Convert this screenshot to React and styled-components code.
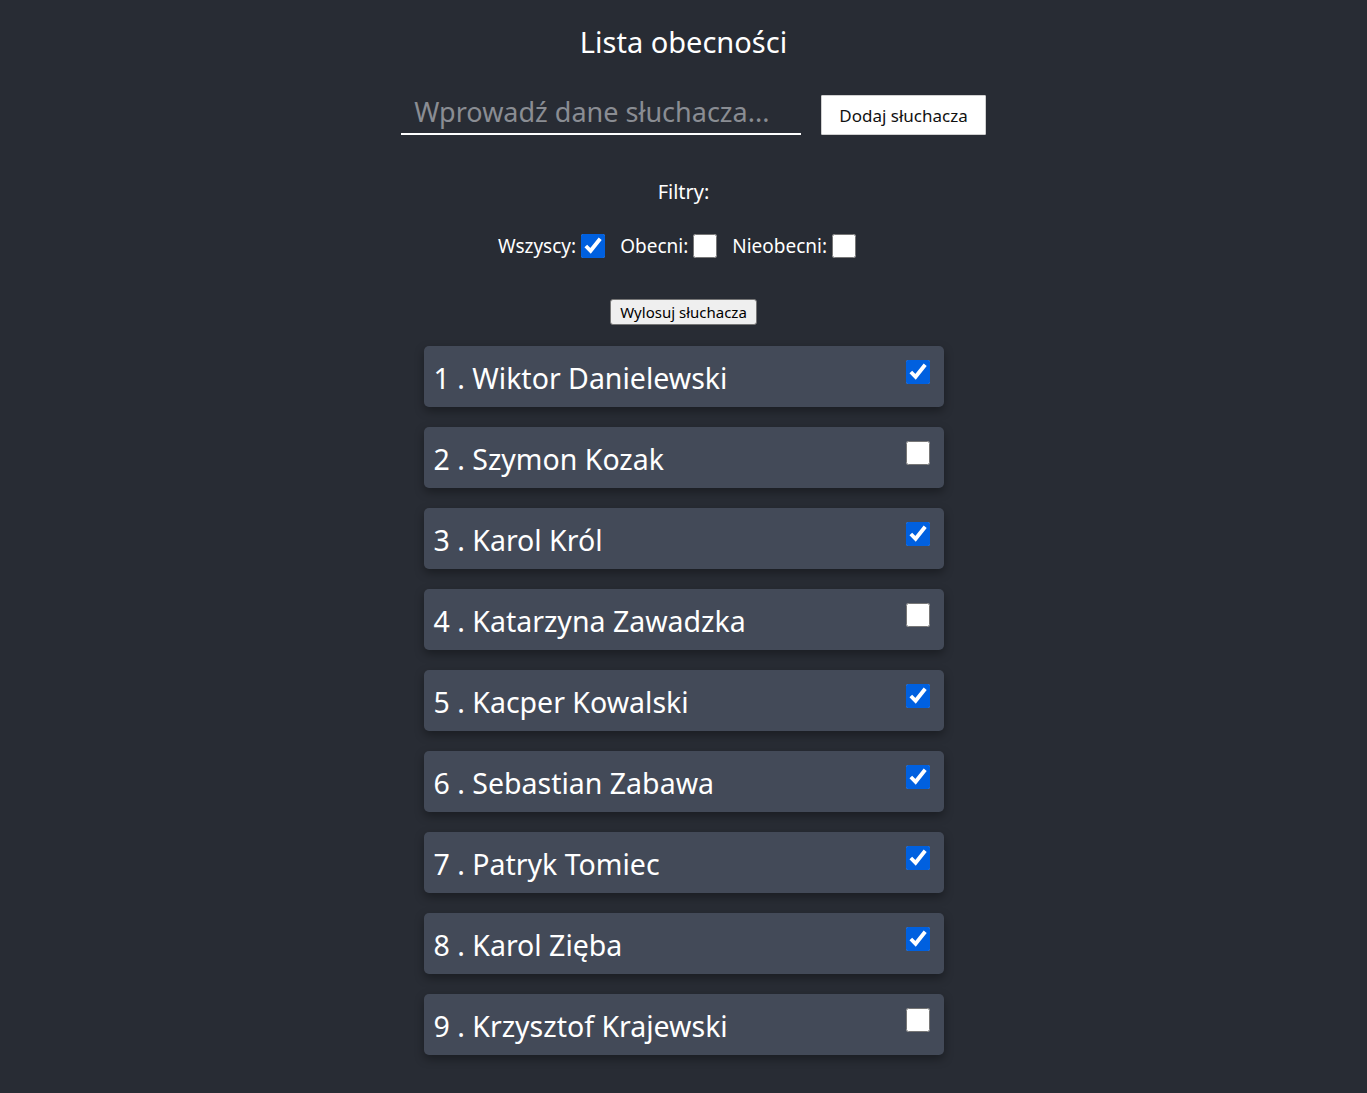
import React, { useState } from "react";
import styled, { createGlobalStyle } from "styled-components";

const GlobalStyle = createGlobalStyle`
  html, body {
    margin: 0;
    background: #282c34;
  }
  body {
    font-family: "Noto Sans", "Open Sans", sans-serif;
    color: #ffffff;
  }
`;

const initialStudents = [
  { id: 1, name: "Wiktor Danielewski", present: true },
  { id: 2, name: "Szymon Kozak", present: false },
  { id: 3, name: "Karol Król", present: true },
  { id: 4, name: "Katarzyna Zawadzka", present: false },
  { id: 5, name: "Kacper Kowalski", present: true },
  { id: 6, name: "Sebastian Zabawa", present: true },
  { id: 7, name: "Patryk Tomiec", present: true },
  { id: 8, name: "Karol Zięba", present: true },
  { id: 9, name: "Krzysztof Krajewski", present: false },
];

const App = () => {
  const [students, setStudents] = useState(initialStudents);
  const [filter, setFilter] = useState("all");
  const [input, setInput] = useState("");

  const toggleHandler = (id) => {
    setStudents((prev) =>
      prev.map((s) => (s.id === id ? { ...s, present: !s.present } : s))
    );
  };

  const addHandler = () => {
    if (!input.trim()) return;
    setStudents((prev) => [
      ...prev,
      { id: prev.length + 1, name: input.trim(), present: false },
    ]);
    setInput("");
  };

  const visible = students.filter((s) =>
    filter === "all" ? true : filter === "present" ? s.present : !s.present
  );

  return (
    <Page>
      <GlobalStyle />
      <Title>Lista obecności</Title>

      <AddRow>
        <NameInput
          placeholder="Wprowadź dane słuchacza..."
          value={input}
          onChange={(e) => setInput(e.target.value)}
        />
        <AddButton onClick={addHandler}>Dodaj słuchacza</AddButton>
      </AddRow>

      <FilterTitle>Filtry:</FilterTitle>
      <FilterRow>
        <FilterLabel>
          Wszyscy:
          <Check
            type="checkbox"
            checked={filter === "all"}
            onChange={() => setFilter("all")}
          />
        </FilterLabel>
        <FilterLabel>
          Obecni:
          <Check
            type="checkbox"
            checked={filter === "present"}
            onChange={() => setFilter("present")}
          />
        </FilterLabel>
        <FilterLabel>
          Nieobecni:
          <Check
            type="checkbox"
            checked={filter === "absent"}
            onChange={() => setFilter("absent")}
          />
        </FilterLabel>
      </FilterRow>

      <DrawButton>Wylosuj słuchacza</DrawButton>

      <List>
        {visible.map((s) => (
          <Card key={s.id}>
            <CardName>
              {s.id} . {s.name}
            </CardName>
            <Check
              type="checkbox"
              checked={s.present}
              onChange={() => toggleHandler(s.id)}
            />
          </Card>
        ))}
      </List>
    </Page>
  );
};

export default App;

const Page = styled.div`
  min-height: 1093px;
  display: flex;
  flex-direction: column;
  align-items: center;
  padding-top: 21px;
  box-sizing: border-box;
`;

const Title = styled.h1`
  margin: 0;
  font-size: 29px;
  font-weight: 400;
  line-height: 42px;
`;

const AddRow = styled.div`
  display: flex;
  align-items: center;
  gap: 20px;
  margin-top: 32px;
`;

const NameInput = styled.input`
  width: 400px;
  height: 40px;
  margin-left: 20px;
  box-sizing: border-box;
  padding: 0 12px 5px 13px;
  background: transparent;
  border: none;
  border-bottom: 2px solid #ffffff;
  outline: none;
  color: #ffffff;
  font-family: inherit;
  font-size: 27px;

  &::placeholder {
    color: #8a8d93;
  }
`;

const AddButton = styled.button`
  height: 40px;
  padding: 0 17px;
  background: #ffffff;
  border: 1px solid #d0d0d0;
  border-radius: 1px;
  color: #111111;
  font-family: inherit;
  font-size: 17px;
  cursor: pointer;
`;

const FilterTitle = styled.p`
  margin: 43px 0 0;
  font-size: 20px;
  line-height: 28px;
`;

const FilterRow = styled.div`
  display: flex;
  align-items: center;
  gap: 15px;
  margin-top: 27px;
  padding-right: 13px;
`;

const FilterLabel = styled.label`
  display: flex;
  align-items: center;
  gap: 5px;
  font-size: 19px;
`;

const Check = styled.input`
  width: 24px;
  height: 24px;
  margin: 0;
  accent-color: #0060df;
  cursor: pointer;
`;

const DrawButton = styled.button`
  margin-top: 40px;
  height: 26px;
  padding: 0 9px;
  font-family: inherit;
  font-size: 15px;
  color: #000000;
  background: #efefef;
  border: 1px solid #767676;
  border-radius: 3px;
  cursor: pointer;
`;

const List = styled.div`
  display: flex;
  flex-direction: column;
  gap: 20px;
  margin-top: 21px;
  padding-bottom: 38px;
`;

const Card = styled.div`
  width: 520px;
  height: 61px;
  box-sizing: border-box;
  display: flex;
  justify-content: space-between;
  align-items: flex-start;
  padding: 14px 14px 0 10px;
  background: #434a58;
  border-radius: 5px;
  box-shadow: 0 4px 10px rgba(0, 0, 0, 0.35);
`;

const CardName = styled.span`
  font-size: 28.5px;
  line-height: 36px;
`;
